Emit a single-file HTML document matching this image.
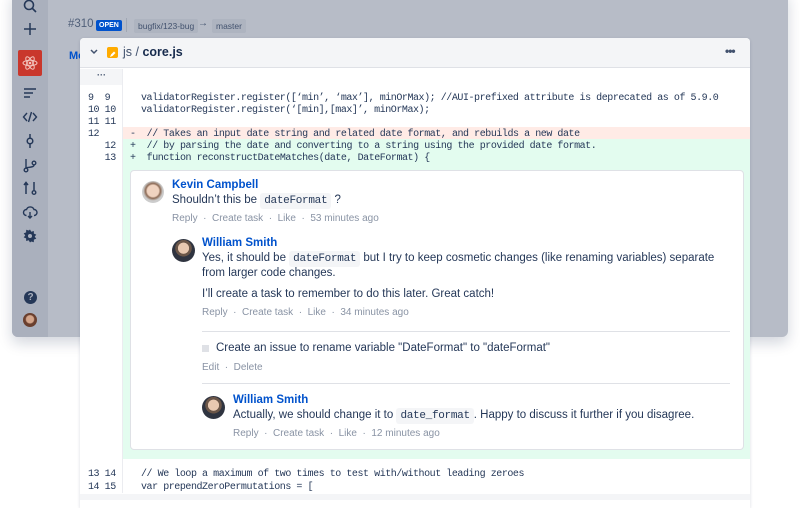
<!DOCTYPE html>
<html><head><style>
*{margin:0;padding:0;box-sizing:border-box}
body{width:800px;height:500px;overflow:hidden;background:#fff;position:relative;font-family:"Liberation Sans",sans-serif;color:#172b4d}
.app{position:absolute;left:12px;top:-10px;width:776px;height:347px;background:#b7bcc7;border-radius:6px;box-shadow:0 6px 14px rgba(9,30,66,.18)}
.nav{position:absolute;left:12px;top:-10px;width:36px;height:347px;background:#aab0bd;border-radius:6px 0 0 6px}
.ic{position:absolute;left:22px;width:16px;height:16px}
.panel{position:absolute;left:80px;top:38px;width:670px;height:470px;background:#fff;border-radius:4px 4px 0 0;box-shadow:0 1px 3px rgba(9,30,66,.15)}
.hdr{position:absolute;left:0;top:0;width:670px;height:30px;background:#f4f5f7;border-bottom:1px solid #dfe1e6;border-radius:4px 4px 0 0}
.mono{font-family:"Liberation Mono",monospace;font-size:10px;letter-spacing:-.45px;color:#253858;white-space:pre}
.row{position:absolute;height:12px;line-height:12px}
.cbox{position:absolute;left:130px;top:170px;width:614px;height:280px;background:#fff;border:1px solid #dfe1e6;border-radius:4px}
.nm{position:absolute;color:#0052cc;font-weight:bold;font-size:11.5px}
.tx{position:absolute;font-size:11.5px;color:#253858;white-space:nowrap}
.meta{position:absolute;font-size:10px;color:#8993a4;white-space:nowrap}
code{font-family:"Liberation Mono",monospace;font-size:11px;background:#f4f5f7;padding:2px 4px;border-radius:3px;letter-spacing:-.3px}
.av{position:absolute;border-radius:50%;background:radial-gradient(circle at 50% 40%,#e8c8b0 0 30%,#6b5648 32% 45%,#2f3440 47%)}
</style></head><body>
<div class="app"></div>
<div class="nav"></div>
<svg class="ic" style="top:-2px" viewBox="0 0 16 16"><circle cx="7" cy="7" r="4.5" fill="none" stroke="#253858" stroke-width="1.6"/><path d="M10.5 10.5L14 14" stroke="#253858" stroke-width="1.6"/></svg>
<svg class="ic" style="top:21px" viewBox="0 0 16 16"><path d="M8 2v12M2 8h12" stroke="#253858" stroke-width="1.5"/></svg>
<div style="position:absolute;left:18px;top:50px;width:24px;height:26px;background:#c9372c;border-radius:2px"></div>
<svg class="ic" style="top:55px;left:22px" viewBox="0 0 16 16"><g fill="none" stroke="#f3c5be" stroke-width="1"><ellipse cx="8" cy="8" rx="7" ry="2.7"/><ellipse cx="8" cy="8" rx="7" ry="2.7" transform="rotate(60 8 8)"/><ellipse cx="8" cy="8" rx="7" ry="2.7" transform="rotate(120 8 8)"/></g><circle cx="8" cy="8" r="1.3" fill="#f3c5be"/></svg>
<svg class="ic" style="top:85px" viewBox="0 0 16 16"><path d="M2 4h12M2 8h9M2 12h6" stroke="#253858" stroke-width="1.4"/></svg>
<svg class="ic" style="top:109px" viewBox="0 0 16 16"><path d="M5 4L1.5 8 5 12M11 4l3.5 4L11 12M9.5 3l-3 10" fill="none" stroke="#253858" stroke-width="1.4"/></svg>
<svg class="ic" style="top:133px" viewBox="0 0 16 16"><circle cx="8" cy="8" r="2.8" fill="none" stroke="#253858" stroke-width="1.5"/><path d="M8 1v4M8 11v4" stroke="#253858" stroke-width="1.5"/></svg>
<svg class="ic" style="top:157px" viewBox="0 0 16 16"><circle cx="4" cy="13" r="1.8" fill="none" stroke="#253858" stroke-width="1.4"/><circle cx="12" cy="6" r="1.8" fill="none" stroke="#253858" stroke-width="1.4"/><path d="M4 2v9M12 8c0 3-8 2-8 3" fill="none" stroke="#253858" stroke-width="1.4"/></svg>
<svg class="ic" style="top:180px" viewBox="0 0 16 16"><path d="M4 14V3M2 5l2-2.5L6 5M12 2v8" fill="none" stroke="#253858" stroke-width="1.5"/><circle cx="12" cy="12.5" r="1.8" fill="none" stroke="#253858" stroke-width="1.4"/></svg>
<svg class="ic" style="top:204px" viewBox="0 0 16 16"><path d="M4.5 11.5a3 3 0 0 1 0-6 4 4 0 0 1 7.5 0 3 3 0 0 1 0 6" fill="none" stroke="#253858" stroke-width="1.4"/><path d="M8 8v6M6 12l2 2 2-2" fill="none" stroke="#253858" stroke-width="1.4"/></svg>
<svg class="ic" style="top:228px" viewBox="0 0 16 16"><path d="M8 1.5l1.3 2.2 2.5-.7.1 2.6 2.4 1-1.6 2 1.6 2-2.4 1-.1 2.6-2.5-.7L8 14.5l-1.3-2.2-2.5.7-.1-2.6-2.4-1 1.6-2-1.6-2 2.4-1 .1-2.6 2.5.7z" fill="#253858"/><circle cx="8" cy="8" r="2" fill="#aab0bd"/></svg>
<div style="position:absolute;left:24px;top:291px;width:13px;height:13px;border-radius:50%;background:#253858;color:#aab0bd;font-size:10px;font-weight:bold;text-align:center;line-height:13px">?</div>
<div class="av" style="left:23px;top:313px;width:14px;height:14px;background:radial-gradient(circle at 50% 45%,#d4a58a 0 35%,#6a3f2e 45%)"></div>
<div style="position:absolute;left:68px;top:18px;font-size:11.5px;color:#505f79">#310</div>
<div style="position:absolute;left:96px;top:20px;background:#0052cc;color:#fff;font-size:7px;font-weight:bold;padding:1px 3px;border-radius:2px;line-height:9px">OPEN</div>
<div style="position:absolute;left:126px;top:18px;width:1px;height:14px;background:#a0a7b4"></div>
<div style="position:absolute;left:134px;top:19px;background:#aeb4c0;color:#42526e;font-size:8.5px;padding:2px 4px;border-radius:2px">bugfix/123-bug</div>
<div style="position:absolute;left:198px;top:18px;color:#42526e;font-size:10px">→</div>
<div style="position:absolute;left:212px;top:19px;background:#aeb4c0;color:#42526e;font-size:8.5px;padding:2px 4px;border-radius:2px">master</div>
<div style="position:absolute;left:69px;top:50px;color:#0052cc;font-weight:bold;font-size:11px">Mo</div>
<div class="panel">
 <div class="hdr">
  <svg style="position:absolute;left:10px;top:11px" width="8" height="6" viewBox="0 0 8 6"><path d="M1 1l3 3 3-3" fill="none" stroke="#42526e" stroke-width="1.5"/></svg>
  <div style="position:absolute;left:27px;top:9px;width:11px;height:11px;background:#ffab00;border-radius:2px"><svg width="11" height="11" viewBox="0 0 11 11"><path d="M3 8l1-2.5 3-3 1.5 1.5-3 3z" fill="#fff"/></svg></div>
  <div style="position:absolute;left:43px;top:7px;font-size:12.5px;color:#42526e">js / <b style="color:#172b4d;font-weight:600">core.js</b></div>
  <div style="position:absolute;left:645px;top:6px;font-size:12px;color:#42526e;font-weight:bold;letter-spacing:-1px">•••</div>
 </div>
</div>
<div style="position:absolute;left:80px;top:69px;width:42px;height:16px;background:#f4f5f7"></div>
<div style="position:absolute;left:97px;top:70px;font-size:9px;color:#42526e;font-weight:bold">···</div>
<div style="position:absolute;left:122px;top:69px;width:1px;height:424px;background:#ebecf0"></div>
<div style="position:absolute;left:123px;top:127px;width:627px;height:12px;background:#ffebe6"></div>
<div style="position:absolute;left:123px;top:139px;width:627px;height:320px;background:#e3fcef"></div>
<div class="mono row" style="left:88px;top:93px">9  9</div>
<div class="mono row" style="left:88px;top:105px">10 10</div>
<div class="mono row" style="left:88px;top:117px">11 11</div>
<div class="mono row" style="left:88px;top:129px">12</div>
<div class="mono row" style="left:88px;top:141px">   12</div>
<div class="mono row" style="left:88px;top:153px">   13</div>
<div class="mono row" style="left:141px;top:93px">validatorRegister.register([‘min’, ‘max’], minOrMax); //AUI-prefixed attribute is deprecated as of 5.9.0</div>
<div class="mono row" style="left:141px;top:105px">validatorRegister.register(‘[min],[max]’, minOrMax);</div>
<div class="mono row" style="left:130px;top:129px">-  // Takes an input date string and related date format, and rebuilds a new date</div>
<div class="mono row" style="left:130px;top:141px">+  // by parsing the date and converting to a string using the provided date format.</div>
<div class="mono row" style="left:130px;top:153px">+  function reconstructDateMatches(date, DateFormat) {</div>
<div class="cbox"></div>
<div class="av" style="left:142px;top:181px;width:22px;height:22px;background:radial-gradient(circle at 50% 45%,#f0d3c0 0 35%,#8c6a55 45%,#ccc 60%)"></div>
<div class="nm" style="left:172px;top:179px">Kevin Campbell</div>
<div class="tx" style="left:172px;top:194px">Shouldn’t this be <code>dateFormat</code> ?</div>
<div class="meta" style="left:172px;top:213px">Reply &nbsp;·&nbsp; Create task &nbsp;·&nbsp; Like &nbsp;·&nbsp; 53 minutes ago</div>
<div class="av" style="left:172px;top:239px;width:23px;height:23px"></div>
<div class="nm" style="left:202px;top:237px">William Smith</div>
<div class="tx" style="left:202px;top:252px">Yes, it should be <code>dateFormat</code> but I try to keep cosmetic changes (like renaming variables) separate</div>
<div class="tx" style="left:202px;top:267px">from larger code changes.</div>
<div class="tx" style="left:202px;top:288px">I’ll create a task to remember to do this later. Great catch!</div>
<div class="meta" style="left:202px;top:307px">Reply &nbsp;·&nbsp; Create task &nbsp;·&nbsp; Like &nbsp;·&nbsp; 34 minutes ago</div>
<div style="position:absolute;left:202px;top:331px;width:528px;height:1px;background:#dfe1e6"></div>
<div style="position:absolute;left:202px;top:345px;width:7px;height:7px;background:#dfe1e6"></div>
<div class="tx" style="left:216px;top:342px">Create an issue to rename variable "DateFormat" to "dateFormat"</div>
<div class="meta" style="left:202px;top:362px">Edit &nbsp;·&nbsp; Delete</div>
<div style="position:absolute;left:202px;top:383px;width:528px;height:1px;background:#dfe1e6"></div>
<div class="av" style="left:202px;top:396px;width:23px;height:23px"></div>
<div class="nm" style="left:233px;top:394px">William Smith</div>
<div class="tx" style="left:233px;top:409px">Actually, we should change it to <code>date_format</code>. Happy to discuss it further if you disagree.</div>
<div class="meta" style="left:233px;top:428px">Reply &nbsp;·&nbsp; Create task &nbsp;·&nbsp; Like &nbsp;·&nbsp; 12 minutes ago</div>
<div class="mono row" style="left:88px;top:469px">13 14</div>
<div class="mono row" style="left:88px;top:482px">14 15</div>
<div class="mono row" style="left:141px;top:469px">// We loop a maximum of two times to test with/without leading zeroes</div>
<div class="mono row" style="left:141px;top:482px">var prependZeroPermutations = [</div>
<div style="position:absolute;left:80px;top:494px;width:670px;height:6px;background:#f4f5f7"></div>
</body></html>
